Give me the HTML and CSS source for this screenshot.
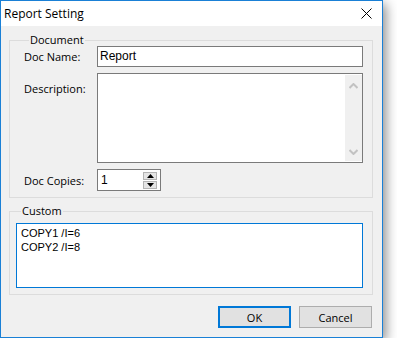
FILE: index.html
```html
<!DOCTYPE html>
<html>
<head>
<meta charset="utf-8">
<link rel="stylesheet" href="styles.css">
</head>
<body>
<div class="window">
  <div class="titlebar">
    <span class="title">Report Setting</span>
    <svg class="close" width="11" height="11" viewBox="0 0 11 11"><path d="M0.5 0.5 L10.5 10.5 M10.5 0.5 L0.5 10.5" stroke="#000" stroke-width="1" fill="none"/></svg>
  </div>
  <div class="content">
    <fieldset class="group doc">
      <legend>Document</legend>
      <div class="row">
        <label class="lbl">Doc Name:</label>
        <div class="input">Report</div>
      </div>
      <div class="row desc-row">
        <label class="lbl desc-lbl">Description:</label>
        <div class="input textarea">
          <div class="text-area-body"></div>
          <div class="vscroll">
            <svg width="9" height="6" viewBox="0 0 9 6"><path d="M0.5 5 L4.5 1 L8.5 5" stroke="#c2c2c2" stroke-width="2" fill="none"/></svg>
            <svg width="9" height="6" viewBox="0 0 9 6"><path d="M0.5 1 L4.5 5 L8.5 1" stroke="#c2c2c2" stroke-width="2" fill="none"/></svg>
          </div>
        </div>
      </div>
      <div class="row copies-row">
        <label class="lbl">Doc Copies:</label>
        <div class="spin">
          <span class="spin-val">1</span>
          <div class="spin-btns">
            <div class="spin-btn"><svg width="7" height="4" viewBox="0 0 7 4"><path d="M0 4 L3.5 0 L7 4 Z" fill="#000"/></svg></div>
            <div class="spin-btn"><svg width="7" height="4" viewBox="0 0 7 4"><path d="M0 0 L3.5 4 L7 0 Z" fill="#000"/></svg></div>
          </div>
        </div>
      </div>
    </fieldset>
    <fieldset class="group custom">
      <legend>Custom</legend>
      <div class="custom-box">
        <div>COPY1 /I=6</div>
        <div>COPY2 /I=8</div>
      </div>
    </fieldset>
    <div class="buttons">
      <button class="btn default">OK</button>
      <button class="btn">Cancel</button>
    </div>
  </div>
</div>
</body>
</html>
```

FILE: styles.css
```css
html, body {
  margin: 0;
  padding: 0;
  background: #ffffff;
}
body {
  font-family: "Open Sans", "Liberation Sans", sans-serif;
  font-size: 11px;
  color: #000;
}
.window {
  box-sizing: border-box;
  width: 383px;
  height: 338px;
  border: 1px solid #1a80d6;
  background: #f0f0f0;
  box-shadow: 3px 4px 11px rgba(0, 0, 0, 0.45);
  display: flex;
  flex-direction: column;
}
.titlebar {
  height: 25px;
  background: #ffffff;
  display: flex;
  align-items: center;
  justify-content: space-between;
  padding: 0 10px 0 3px;
  flex: none;
}
.title {
  font-size: 12px;
  line-height: 14px;
}
.close {
  display: block;
}
.content {
  padding: 8px 9px 0 8px;
  display: flex;
  flex-direction: column;
}
.group {
  margin: 0;
  border: 1px solid #dcdcdc;
  min-width: 0;
}
.group legend {
  padding: 0 1px;
  margin-left: 5px;
  line-height: 12px;
  height: 12px;
}
.doc {
  padding: 0 9px 6px 14px;
}
.row {
  display: flex;
  align-items: center;
}
.lbl {
  width: 73px;
  flex: none;
}
.input {
  box-sizing: border-box;
  flex: 1;
  height: 21px;
  border: 1px solid #7a7a7a;
  background: #fff;
  padding: 0 2px;
  line-height: 19px;
  font-family: "Liberation Sans", sans-serif;
  font-size: 12px;
}
.desc-row {
  margin-top: 6px;
  align-items: flex-start;
}
.desc-lbl {
  padding-top: 8px;
}
.textarea {
  height: 90px;
  padding: 0;
  display: flex;
}
.text-area-body {
  flex: 1;
}
.vscroll {
  width: 17px;
  background: #f0f0f0;
  display: flex;
  flex-direction: column;
  justify-content: space-between;
  align-items: center;
  padding: 8px 0 6px;
  margin: 1px 0;
  box-sizing: border-box;
}
.vscroll svg {
  display: block;
}
.copies-row {
  margin-top: 6px;
}
.spin {
  box-sizing: border-box;
  width: 64px;
  height: 22px;
  border: 1px solid #7a7a7a;
  background: #fff;
  display: flex;
  align-items: center;
  justify-content: space-between;
  padding: 0 3px 0 3px;
}
.spin-val {
  font-family: "Liberation Sans", sans-serif;
  font-size: 12px;
}
.spin-btns {
  display: flex;
  flex-direction: column;
  gap: 1px;
}
.spin-btn {
  box-sizing: border-box;
  width: 14px;
  height: 8px;
  background: #e5e5e5;
  border: 1px solid #b4b4b4;
  display: flex;
  align-items: center;
  justify-content: center;
}
.spin-btn svg {
  display: block;
}
.custom {
  margin-top: 7px;
  padding: 6px 9px 6px 6px;
}
.custom-box {
  box-sizing: border-box;
  height: 65px;
  border: 1px solid #0078d7;
  background: #fff;
  padding: 2px 4px;
  font-family: "Liberation Sans", sans-serif;
  font-size: 11px;
  line-height: 14px;
}
.buttons {
  display: flex;
  justify-content: flex-end;
  gap: 8px;
  margin-top: 11px;
  padding-right: 1px;
}
.btn {
  box-sizing: border-box;
  width: 73px;
  height: 22px;
  background: #e1e1e1;
  border: 1px solid #adadad;
  font-family: "Open Sans", "Liberation Sans", sans-serif;
  font-size: 11px;
  color: #000;
  padding: 0;
  margin: 0;
}
.btn.default {
  border: 2px solid #0078d7;
}
```
